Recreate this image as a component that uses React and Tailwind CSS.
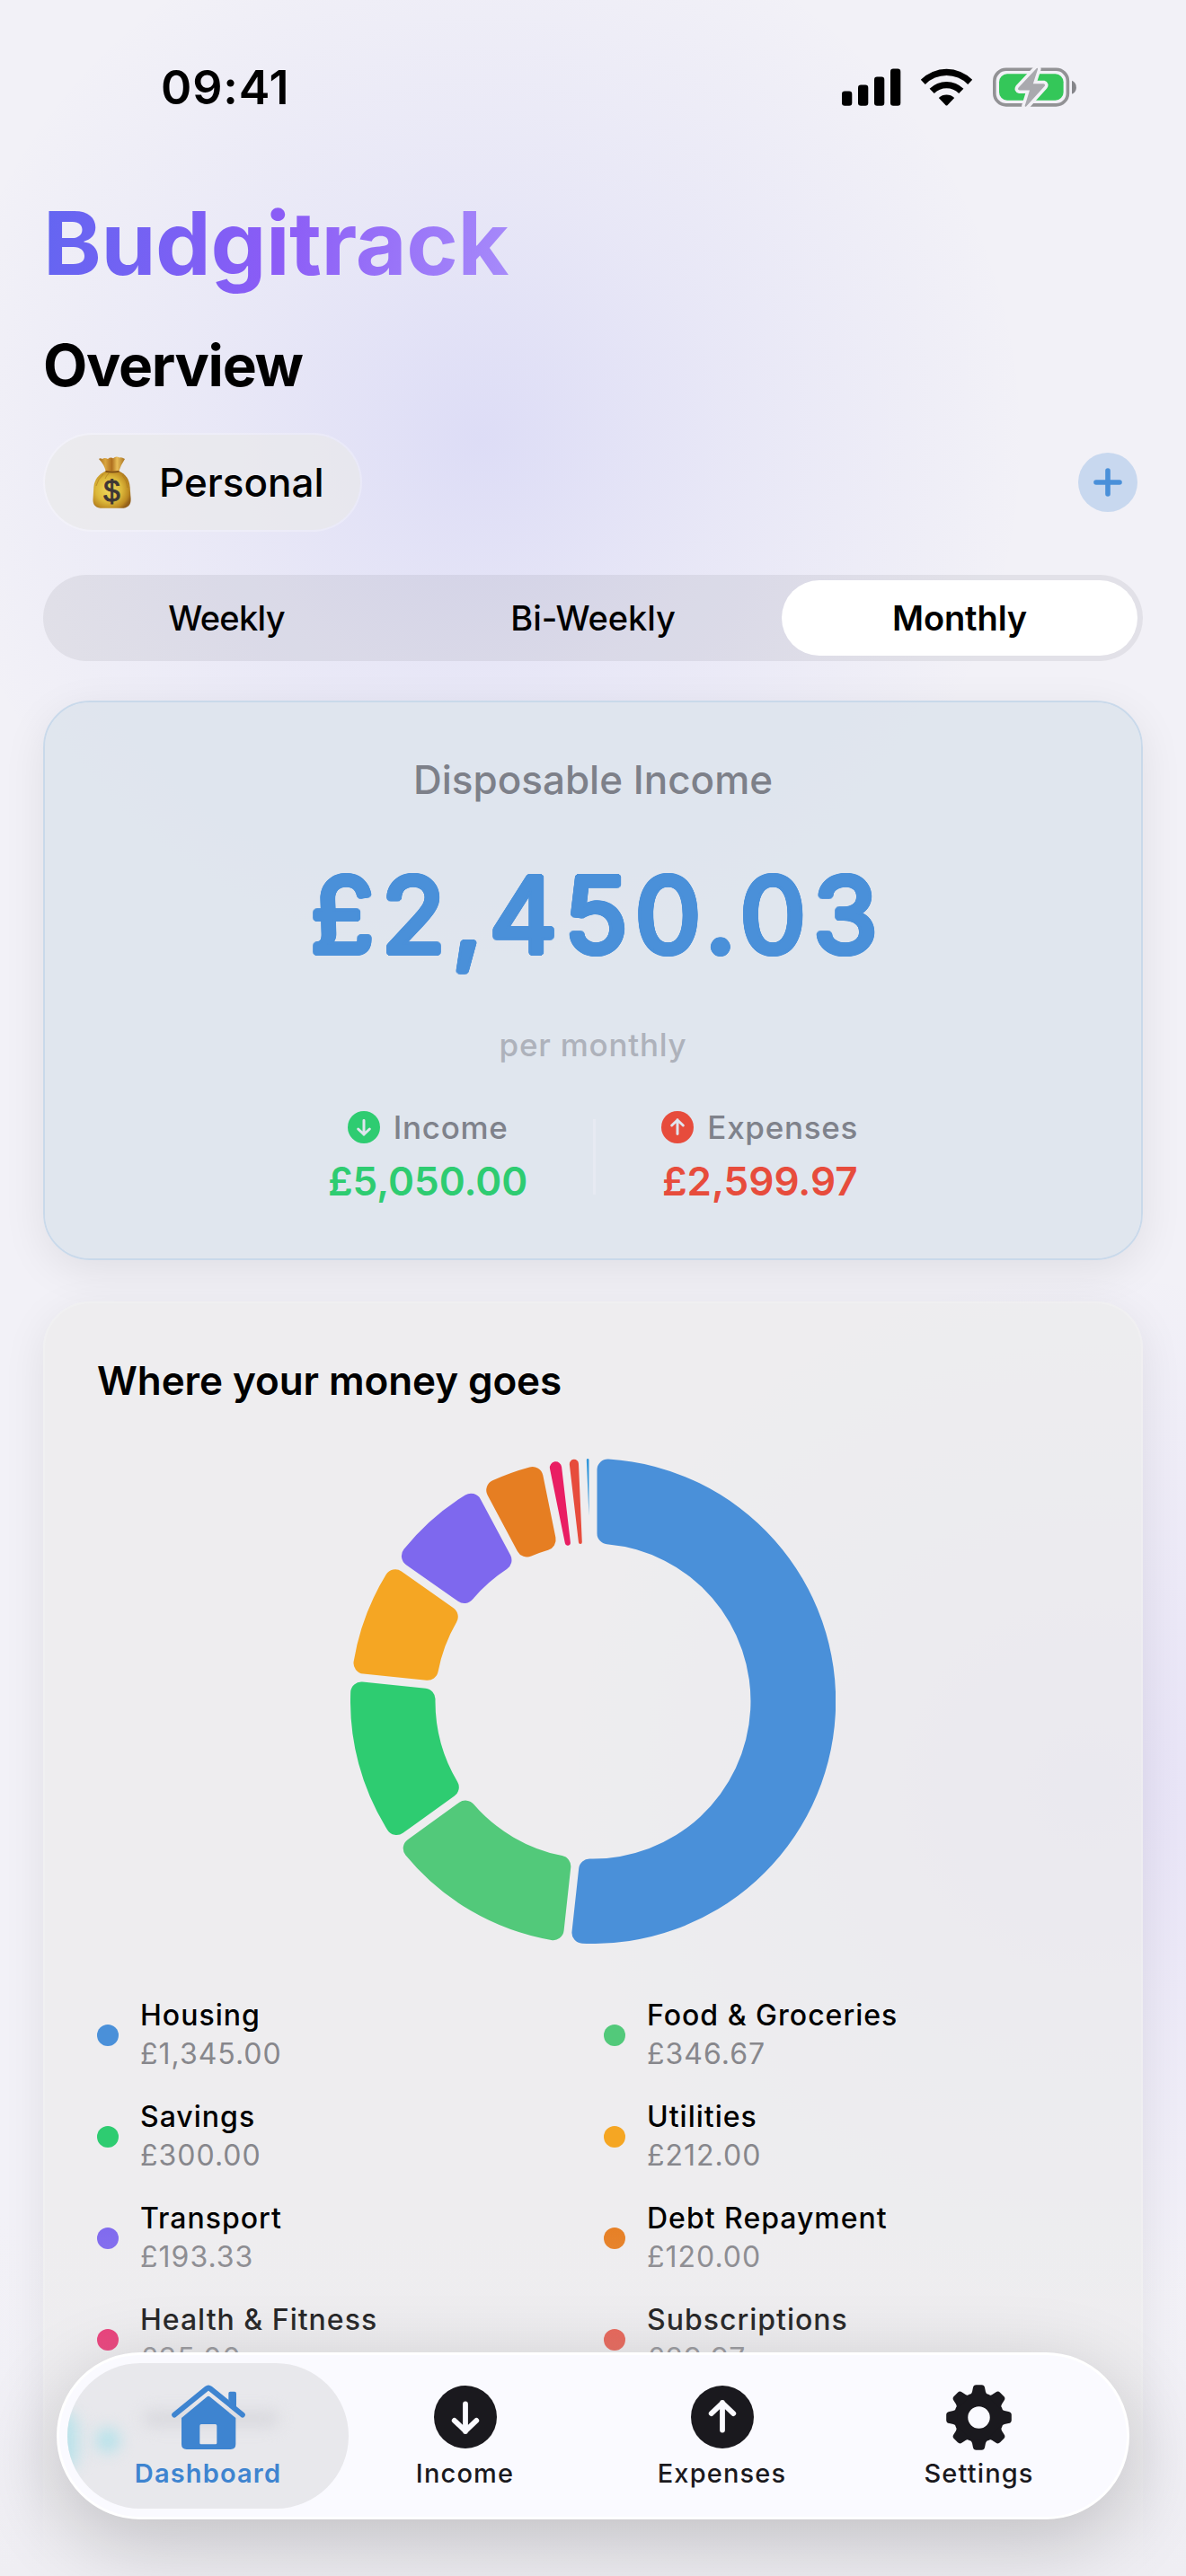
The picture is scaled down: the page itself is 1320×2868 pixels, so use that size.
import React from "react";

const SLICES = [
  { value: 1345, color: "#4a90d9" },
  { value: 346.67, color: "#52c97a" },
  { value: 300, color: "#2ecc71" },
  { value: 212, color: "#f5a623" },
  { value: 193.33, color: "#7e68ee" },
  { value: 120, color: "#e67e22" },
  { value: 35, color: "#e91e63" },
  { value: 29.97, color: "#e74c3c" },
  { value: 18, color: "#3498db" },
];

const LEGEND = [
  { name: "Housing", amount: "£1,345.00", dot: "bg-[#4a90d9]" },
  { name: "Food & Groceries", amount: "£346.67", dot: "bg-[#52c97a]" },
  { name: "Savings", amount: "£300.00", dot: "bg-[#2ecc71]" },
  { name: "Utilities", amount: "£212.00", dot: "bg-[#f5a623]" },
  { name: "Transport", amount: "£193.33", dot: "bg-[#7e68ee]" },
  { name: "Debt Repayment", amount: "£120.00", dot: "bg-[#e67e22]" },
  { name: "Health & Fitness", amount: "£35.00", dot: "bg-[#e91e63]" },
  { name: "Subscriptions", amount: "£29.97", dot: "bg-[#e74c3c]" },
];

const OUTER = 270;
const INNER = 175.5;
const INSET = 4.5;
const CORNER = 12;

// Point on the chart: `r` from the centre, clockwise angle `a` from 12 o'clock.
const pt = (r, a) => `${(270 + r * Math.sin(a)).toFixed(2)} ${(270 - r * Math.cos(a)).toFixed(2)}`;

// Ring slice whose sides run parallel to its radii, with rounded corners.
function slicePath(a0, a1) {
  const half = Math.min((a1 - a0) / 2, Math.PI / 2);
  const s = Math.sin(half);
  const isLarge = (trim) => (a1 - a0 - 2 * trim > Math.PI ? 1 : 0);
  const co = Math.max(0, Math.min(CORNER, (OUTER * s - INSET) / (1 + s)));
  const ao = Math.asin((INSET + co) / (OUTER - co));
  const lo = Math.sqrt((OUTER - co) ** 2 - (INSET + co) ** 2);
  const side = (len) => [Math.hypot(len, INSET), Math.atan2(INSET, len)];
  const [ro, ago] = side(lo);
  const head = `M${pt(ro, a0 + ago)} A${co} ${co} 0 0 1 ${pt(OUTER, a0 + ao)} A${OUTER} ${OUTER} 0 ${isLarge(ao)} 1 ${pt(OUTER, a1 - ao)} A${co} ${co} 0 0 1 ${pt(ro, a1 - ago)}`;
  if (INNER * s <= INSET) {
    return `${head} L${pt(INSET / s, (a0 + a1) / 2)} Z`;
  }
  const ci = Math.min(CORNER, (INNER * s - INSET) / (1 - s + 1e-6));
  const ai = Math.asin((INSET + ci) / (INNER + ci));
  const li = Math.sqrt((INNER + ci) ** 2 - (INSET + ci) ** 2);
  const [ri, agi] = side(li);
  return `${head} L${pt(ri, a1 - agi)} A${ci} ${ci} 0 0 1 ${pt(INNER, a1 - ai)} A${INNER} ${INNER} 0 ${isLarge(ai)} 0 ${pt(INNER, a0 + ai)} A${ci} ${ci} 0 0 1 ${pt(ri, a0 + agi)} Z`;
}

function Donut() {
  const total = SLICES.reduce((sum, s) => sum + s.value, 0);
  let angle = 0;
  return (
    <svg viewBox="0 0 540 540" className="size-[540px]">
      {SLICES.map((s) => {
        const start = angle;
        angle += (s.value / total) * Math.PI * 2;
        return <path key={s.color} d={slicePath(start, angle)} fill={s.color} />;
      })}
    </svg>
  );
}

function StatusBar() {
  return (
    <div className="flex h-[195px] shrink-0 items-center justify-between pr-[121px] pl-[179px]">
      <span className="text-[52px] font-semibold tracking-[0.87px]">09:41</span>
      <svg viewBox="937 73.5 262 48" className="h-[48px] w-[262px]">
        <rect x="937" y="101" width="11.3" height="16.2" rx="3.2" />
        <rect x="955" y="94" width="11.3" height="23.2" rx="3.2" />
        <rect x="973" y="85" width="11.3" height="32.2" rx="3.2" />
        <rect x="991" y="76" width="11.3" height="41.2" rx="3.2" />
        <path d="M1024.8 88.2a40.6 40.6 0 0 1 57.4 0l-5 5.2a33.3 33.3 0 0 0-47.4 0z" />
        <path d="M1034.6 98.3a26.8 26.8 0 0 1 37.8 0l-5.2 5.2a19.4 19.4 0 0 0-27.4 0z" />
        <path d="M1044.8 108.4a12.7 12.7 0 0 1 17.4 0l-7.6 8.1q-1.1 1-2.2 0z" />
        <rect x="1106.8" y="76.8" width="81.6" height="39.6" rx="13" fill="none" stroke="#929295" strokeWidth="3.6" />
        <rect x="1112" y="81.8" width="71.6" height="29.4" rx="9" fill="#34c759" />
        <path d="M1193 89.3c6.500 2 6.500 13 0 14.800z" fill="#85858a" />
        <path
          d="M1153.800 75.500L1133.600 97q-1.600 2.400 1.200 3h11.200l-5.400 17.500q.4 1.500 1.800.3l20.100-22.200q1.500-2.200-1-2.900h-11.700l5.300-16.400q-.1-1.500-1.300-.8z"
          fill="#a9a9ae"
          stroke="#f2f1f6"
          strokeWidth="7"
          paintOrder="stroke"
          strokeLinejoin="round"
        />
      </svg>
    </div>
  );
}

function MoneyBag() {
  return (
    <svg viewBox="0 0 43 58" className="h-[58px] w-[43px]">
      <defs>
        <radialGradient id="bag" cx="0.42" cy="0.5" r="0.62">
          <stop offset="0" stopColor="#f0d95c" />
          <stop offset="0.55" stopColor="#dcb83a" />
          <stop offset="0.85" stopColor="#bd8a22" />
          <stop offset="1" stopColor="#93601a" />
        </radialGradient>
        <linearGradient id="neck" x1="0" x2="1">
          <stop offset="0" stopColor="#a8701f" />
          <stop offset="0.25" stopColor="#d9a53f" />
          <stop offset="0.5" stopColor="#b0701f" />
          <stop offset="0.7" stopColor="#e8bd57" />
          <stop offset="1" stopColor="#a97424" />
        </linearGradient>
      </defs>
      <path d="M7 3q1.500-1.600 4 0 2.500-2 6 0 3-2.400 6-.8 3-3 7-.7 2.500-.8 6 1.500-5 7.500-7 14.500H15Q13 9 7 3z" fill="url(#neck)" />
      <path d="M14.500 16.500h15C37 20 41 26 41.600 34l1 13.500Q43 57.800 32 57.800H11.500Q0 57.800.5 48l.9-14C2 26 7 20 14.500 16.500z" fill="url(#bag)" />
      <path d="M14.500 16.800q7.500 1.600 15 0" stroke="#7d4e16" strokeWidth="1.800" fill="none" />
      <path d="M12 20q-6 5-8 13M18 19q-3 3-4 6M33 21q5 5 6 14" stroke="#a9761c" strokeWidth="1" fill="none" opacity=".6" />
      <text x="21.500" y="49.500" textAnchor="middle" fontSize="33" fontFamily="Liberation Sans, sans-serif" fill="#3d3535" stroke="#3d3535" strokeWidth=".9">
        $
      </text>
    </svg>
  );
}

function CircleArrow({ up, className, strokeClass }) {
  return (
    <svg viewBox="0 0 70 70" className={className}>
      <circle cx="35" cy="35" r="35" fill="currentColor" />
      <g transform={up ? "rotate(180 35 35)" : undefined}>
        <path d="M35 20.500v30.500M22.700 38.900L35 50.600l12.300-11.700" fill="none" strokeWidth="5.800" strokeLinecap="round" strokeLinejoin="round" className={strokeClass} />
      </g>
    </svg>
  );
}

function HomeIcon() {
  return (
    <svg viewBox="395 165 246 216" className="h-[72px] w-[82px]" fill="currentColor">
      <path d="M404.500 265.500L512 178q6-5 12 0l107.500 87.500" fill="none" stroke="currentColor" strokeWidth="18" strokeLinecap="round" strokeLinejoin="round" />
      <path d="M585 215v-21q0-6 6-6h14q6 0 6 6v52z" />
      <path fillRule="evenodd" d="M428 276l84-70q6-5 12 0l85 70v88q0 17-17 17H445q-17 0-17-17zM494 297q-5 0-5 5v58q0 4 4 4h49q4 0 4-4v-58q0-5-5-5z" />
    </svg>
  );
}

function GearIcon() {
  return (
    <svg viewBox="-36.500 -36.500 73 73" className="size-[73px]">
      <circle r="20" fill="none" stroke="currentColor" strokeWidth="15.500" />
      {[0, 45, 90, 135, 180, 225, 270, 315].map((deg) => (
        <path
          key={deg}
          transform={`rotate(${deg})`}
          d="M-11.500-24q3.400-1.500 4-4.500l.9-4.500q.6-3.300 3.600-3.300h6q3 0 3.600 3.300l.9 4.500q.6 3 4 4.500z"
          fill="currentColor"
        />
      ))}
    </svg>
  );
}

function SummaryItem({ up, label, amount, tone, stroke }) {
  return (
    <div className={`flex flex-col items-center ${tone}`}>
      <div className="flex h-9 items-center gap-[15px]">
        <CircleArrow up={up} className="size-9" strokeClass={stroke} />
        <span className="text-[35px] leading-9 font-medium tracking-[0.7px] text-[#7f828b]">{label}</span>
      </div>
      <span className="mt-[15px] text-[44px] leading-[54px] font-semibold">{amount}</span>
    </div>
  );
}

function TabItem({ label, active, children }) {
  return (
    <div className={`relative flex w-[286px] flex-col items-center pt-9 ${active ? "text-[#3e84d0]" : "text-[#1a191e]"}`}>
      {active && (
        <div className="absolute top-3 -right-[13.5px] -left-[13.5px] h-[162px] overflow-hidden rounded-full bg-[#e8e8ec]">
          <div className="absolute top-[52px] -left-[34px] h-[70px] w-[46px] rounded-full bg-[#b9e2ea] blur-[9px]" />
          <div className="absolute top-[72px] left-[31px] size-[28px] rounded-full bg-[#b9e2ea] blur-[8px]" />
          <div className="absolute top-[52px] left-[84px] h-[20px] w-[152px] rounded-full bg-[#dadadf] blur-[8px]" />
        </div>
      )}
      <div className="relative flex h-[72px] items-center">{children}</div>
      <span className={`relative mt-[9px] text-[29px] leading-9 tracking-[1.15px] ${active ? "font-semibold" : "font-medium"}`}>{label}</span>
    </div>
  );
}

function PeriodPicker() {
  return (
    <div className="mt-12 grid h-24 shrink-0 grid-cols-3 rounded-full bg-[#787880]/13 text-[38px]">
      <div className="flex items-center justify-center font-medium tracking-[-0.7px]">Weekly</div>
      <div className="flex items-center justify-center font-medium tracking-[-0.1px]">Bi-Weekly</div>
      <div className="m-1.5 flex items-center justify-center rounded-full bg-white font-semibold tracking-[-0.1px]">Monthly</div>
    </div>
  );
}

export default function App() {
  return (
    <div className="relative flex h-[2868px] w-[1320px] flex-col overflow-hidden bg-[#f2f1f7] bg-[radial-gradient(circle_610px_at_535px_490px,rgba(99,102,241,0.145),rgba(99,102,241,0.07)_45%,transparent),radial-gradient(circle_580px_at_1210px_1990px,rgba(129,92,246,0.1),rgba(129,92,246,0.05)_45%,transparent)] font-[Inter,sans-serif] text-black">
      <StatusBar />

      <main className="flex flex-col px-12">
        <h1 className="mt-4 w-fit bg-linear-[100deg] from-[#6366f1] via-[#8b5cf6] to-[#a78bfa] bg-clip-text text-[98px] leading-[120px] font-bold tracking-[-0.4px] text-transparent">
          Budgitrack
        </h1>
        <h2 className="mt-[38px] text-[64px] leading-[76px] font-bold tracking-[-1.3px]">Overview</h2>

        <div className="mt-[37px] flex items-center justify-between pr-1.5">
          <div className="flex h-[110px] w-[355px] items-center gap-[31px] rounded-full border-2 border-white/25 bg-[#eaeaea]/65 bg-clip-padding pl-[53px]">
            <MoneyBag />
            <span className="text-[44px] font-medium">Personal</span>
          </div>
          <div className="flex size-[66px] items-center justify-center rounded-full bg-[#4a90d9]/25">
            <svg viewBox="0 0 32 32" className="size-8">
              <path d="M16 3v26M3 16h26" stroke="#4a90d9" strokeWidth="5.600" strokeLinecap="round" />
            </svg>
          </div>
        </div>

        <PeriodPicker />

        <section className="mt-11 flex h-[623px] shrink-0 flex-col items-center rounded-[52px] border-2 border-[#c9d9ea] bg-[#dee4ed]/94 bg-clip-padding pt-[59px] shadow-[0_12px_48px_rgba(0,0,0,0.08)]">
          <p className="text-[44px] leading-[54px] font-medium text-[#7d8089]">Disposable Income</p>
          <p className="mt-16 ml-[10px] text-[117px] leading-[120px] tracking-[7.6px] text-[#4a90d9] [text-shadow:3.2px_0_#4a90d9,-3.2px_0_#4a90d9,0_3.2px_#4a90d9,0_-3.2px_#4a90d9,2.3px_2.3px_#4a90d9,-2.3px_2.3px_#4a90d9,2.3px_-2.3px_#4a90d9,-2.3px_-2.3px_#4a90d9,3px_1.2px_#4a90d9,-3px_1.2px_#4a90d9,3px_-1.2px_#4a90d9,-3px_-1.2px_#4a90d9,1.2px_3px_#4a90d9,-1.2px_3px_#4a90d9,1.2px_-3px_#4a90d9,-1.2px_-3px_#4a90d9]">
            £2,450.03
          </p>
          <p className="mt-[62px] text-[35px] leading-[44px] font-medium tracking-[0.76px] text-[#aeb2bb]">per monthly</p>
          <div className="mt-[52px] flex gap-[73px]">
            <SummaryItem label="Income" amount="£5,050.00" tone="text-[#2ecc71]" stroke="stroke-[#dfe5ee]" />
            <div className="mt-[9px] h-[84px] w-[3px] bg-[#e7eaf2]" />
            <SummaryItem up label="Expenses" amount="£2,599.97" tone="text-[#e74c3c]" stroke="stroke-[#dfe5ee]" />
          </div>
        </section>

        <section className="mt-[46px] flex h-[1500px] shrink-0 flex-col rounded-[52px] border-2 border-white/15 bg-[#ececec]/72 px-[58px] pt-[59px] shadow-[0_12px_48px_rgba(0,0,0,0.08)]">
          <h3 className="text-[44px] leading-[54px] font-semibold tracking-[-0.08px]">Where your money goes</h3>
          <div className="mt-[60px] flex justify-center">
            <Donut />
          </div>
          <div className="mt-[58px] grid grid-cols-[564px_1fr] gap-y-[27px]">
            {LEGEND.map((item) => (
              <div key={item.name} className="flex items-center gap-6">
                <span className={`mt-0.5 size-6 rounded-full ${item.dot}`} />
                <div className="flex flex-col text-[32px] leading-[43px] tracking-[1px]">
                  <span className="font-medium">{item.name}</span>
                  <span className="text-[#87878c]">{item.amount}</span>
                </div>
              </div>
            ))}
          </div>
        </section>
      </main>

      <div className="absolute inset-x-0 bottom-0 h-[400px] bg-linear-to-b from-[#efeef3]/0 via-[#efeef3]/30 to-[#efeef3]" />

      <nav className="absolute top-[2619px] left-[63px] flex h-[186px] w-[1194px] rounded-full border-[3px] border-white bg-[#fafaff] pl-[22.5px] shadow-[0_24px_90px_rgba(0,0,0,0.2)]">
        <div className="-mt-[3px] flex">
          <TabItem label="Dashboard" active>
            <HomeIcon />
          </TabItem>
          <TabItem label="Income">
            <CircleArrow className="size-[70px]" strokeClass="stroke-[#fafaff]" />
          </TabItem>
          <TabItem label="Expenses">
            <CircleArrow up className="size-[70px]" strokeClass="stroke-[#fafaff]" />
          </TabItem>
          <TabItem label="Settings">
            <GearIcon />
          </TabItem>
        </div>
      </nav>
    </div>
  );
}
